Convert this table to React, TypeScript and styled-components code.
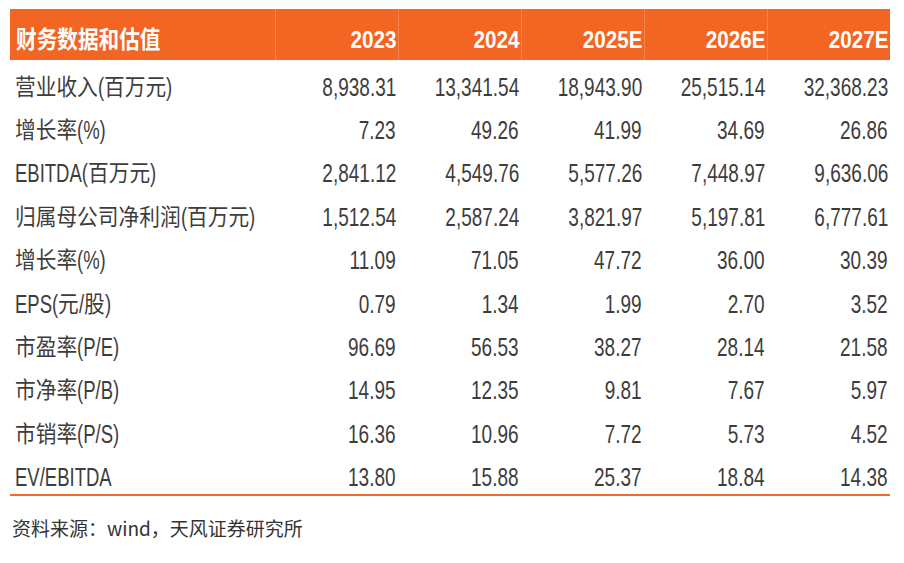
import React from "react";
import styled, { createGlobalStyle } from "styled-components";

const GlobalStyle = createGlobalStyle`
  html, body {
    margin: 0;
    padding: 0;
    background: #ffffff;
  }
`;

// Arial-width latin with a CJK fallback; squeezed below to get the narrow look
const FONT = `"Liberation Sans", "Noto Sans CJK SC", sans-serif`;
const CJK_RE = /([\u3000-\u9fff\uff00-\uffef]+)/;

// Components
const Page = styled.div`
  width: 904px;
  height: 563px;
  padding: 9px 0 0 10px;
  box-sizing: border-box;
  background: #ffffff;
`;

const Table = styled.div`
  display: grid;
  grid-template-columns: 265px repeat(5, 123px);
  grid-template-rows: 51px;
  grid-auto-rows: 43.4px;
  width: 880px;
  border-bottom: 2px solid #ef6a2c;
  font-family: ${FONT};
  color: #3d3d3d;
`;

const HeadCell = styled.div<{ $first?: boolean }>`
  display: flex;
  align-items: center;
  justify-content: ${(p) => (p.$first ? "flex-start" : "flex-end")};
  padding: 11px ${(p) => (p.$first ? "0" : "2px")} 0 ${(p) => (p.$first ? "6px" : "0")};
  background: #f26522;
  color: #ffffff;
  font-weight: bold;
  font-size: 24px;
  border-left: ${(p) => (p.$first ? "none" : "1px solid #f48452")};
`;

const Cell = styled.div<{ $label?: boolean }>`
  display: flex;
  align-items: center;
  justify-content: ${(p) => (p.$label ? "flex-start" : "flex-end")};
  padding: 11px ${(p) => (p.$label ? "0" : "2px")} 0 ${(p) => (p.$label ? "5px" : "0")};
  font-size: 25px;
  white-space: nowrap;
`;

const Squeeze = styled.span<{ $left?: boolean; $scale: number; $size?: number }>`
  display: inline-block;
  line-height: 1;
  font-size: ${(p) => (p.$size ? `${p.$size}px` : "inherit")};
  transform: scaleX(${(p) => p.$scale});
  transform-origin: ${(p) => (p.$left ? "left" : "right")} center;
`;

const Source = styled.div`
  margin-top: 19px;
  padding-left: 2px;
  font-family: "Noto Sans CJK SC", "Noto Sans", sans-serif;
  font-size: 19px;
  line-height: 26px;
  color: #333333;
`;

// squeezed run that gives back the width it lost, so the next run follows on
function Run(props: { text: string; scale: number; size: number }) {
  const ref = React.useRef<HTMLSpanElement>(null);
  const [pull, setPull] = React.useState(0);
  React.useLayoutEffect(() => {
    if (ref.current) {
      setPull(-(1 - props.scale) * ref.current.offsetWidth);
    }
  }, [props.text, props.scale, props.size]);
  return (
    <Squeeze
      ref={ref}
      $left
      $scale={props.scale}
      $size={props.size}
      style={{ marginRight: pull }}
    >
      {props.text}
    </Squeeze>
  );
}

// CJK characters stay wide, latin parts are narrow
function Label(props: { text: string }) {
  const parts = props.text.split(CJK_RE).filter((s) => s.length > 0);
  return (
    <>
      {parts.map((part, i) =>
        CJK_RE.test(part) ? (
          <Run key={i} text={part} scale={0.9} size={23} />
        ) : (
          <Run key={i} text={part} scale={0.74} size={25} />
        )
      )}
    </>
  );
}

const years = ["2023", "2024", "2025E", "2026E", "2027E"];

const rows: Array<[string, string[]]> = [
  ["营业收入(百万元)", ["8,938.31", "13,341.54", "18,943.90", "25,515.14", "32,368.23"]],
  ["增长率(%)", ["7.23", "49.26", "41.99", "34.69", "26.86"]],
  ["EBITDA(百万元)", ["2,841.12", "4,549.76", "5,577.26", "7,448.97", "9,636.06"]],
  ["归属母公司净利润(百万元)", ["1,512.54", "2,587.24", "3,821.97", "5,197.81", "6,777.61"]],
  ["增长率(%)", ["11.09", "71.05", "47.72", "36.00", "30.39"]],
  ["EPS(元/股)", ["0.79", "1.34", "1.99", "2.70", "3.52"]],
  ["市盈率(P/E)", ["96.69", "56.53", "38.27", "28.14", "21.58"]],
  ["市净率(P/B)", ["14.95", "12.35", "9.81", "7.67", "5.97"]],
  ["市销率(P/S)", ["16.36", "10.96", "7.72", "5.73", "4.52"]],
  ["EV/EBITDA", ["13.80", "15.88", "25.37", "18.84", "14.38"]],
];

export default function App() {
  return (
    <Page>
      <GlobalStyle />
      <Table>
        <HeadCell $first>
          <Squeeze $left $scale={0.86}>财务数据和估值</Squeeze>
        </HeadCell>
        {years.map((y) => (
          <HeadCell key={y}>
            <Squeeze $scale={0.86}>{y}</Squeeze>
          </HeadCell>
        ))}
        {rows.map(([label, values], i) => (
          <React.Fragment key={i}>
            <Cell $label>
              <Label text={label} />
            </Cell>
            {values.map((v, j) => (
              <Cell key={j}>
                <Squeeze $scale={0.76}>{v}</Squeeze>
              </Cell>
            ))}
          </React.Fragment>
        ))}
      </Table>
      <Source>资料来源：wind，天风证券研究所</Source>
    </Page>
  );
}
